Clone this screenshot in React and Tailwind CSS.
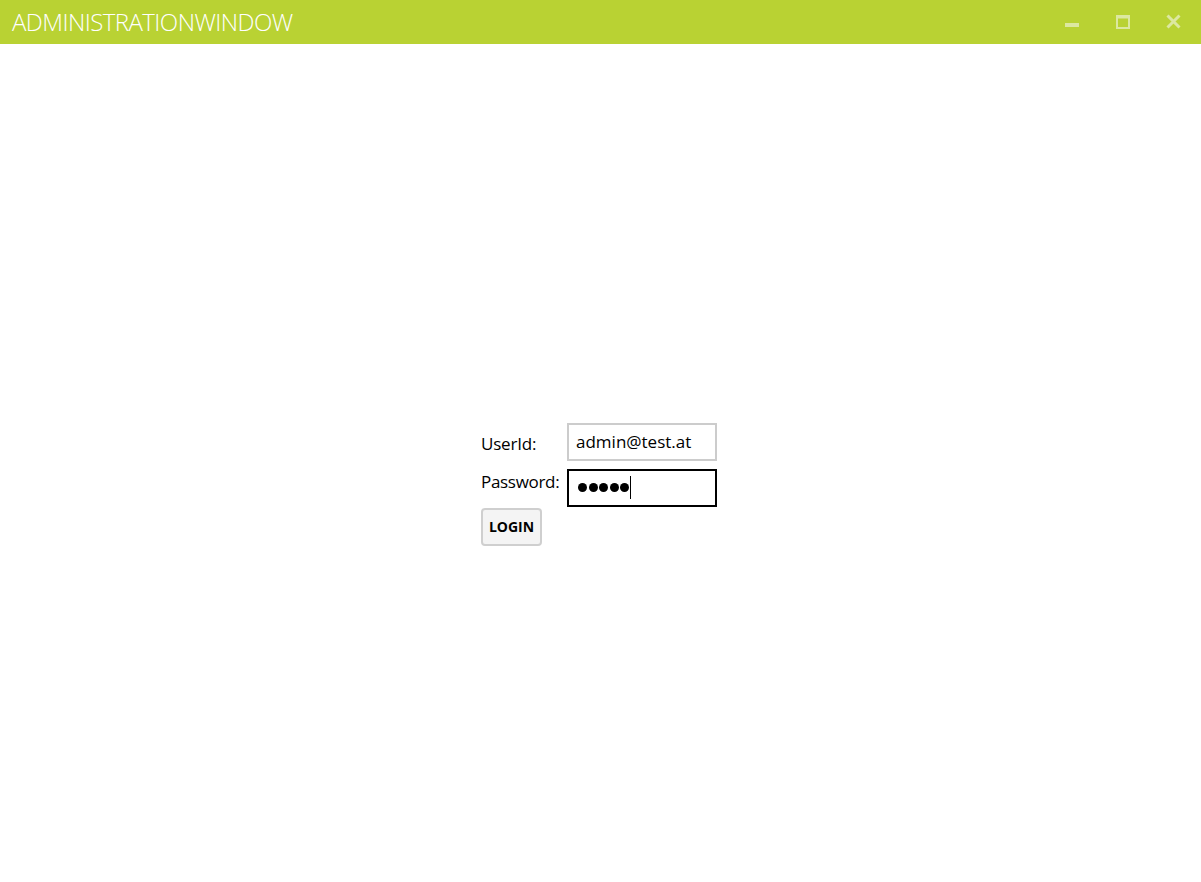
export default function App() {
  return (
    <div className="w-[1201px] h-[882px] bg-white flex flex-col font-['Open_Sans',sans-serif] overflow-hidden">
      {/* title bar */}
      <div className="h-[44px] bg-[#b9d233] flex items-center justify-between shrink-0">
        <h1 className="pl-[12px] text-[24px] font-light text-white tracking-[-0.55px] leading-none">ADMINISTRATIONWINDOW</h1>
        <div className="flex h-full pr-[2px]">
          <button className="w-[51px] h-full flex items-center justify-center">
            <svg width="14" height="14" viewBox="0 0 14 14">
              <rect x="0" y="8" width="14" height="4" fill="#dce8a0" />
            </svg>
          </button>
          <button className="w-[51px] h-full flex items-center justify-center">
            <svg width="14" height="14" viewBox="0 0 14 14" className="mt-[-1px]">
              <rect x="1" y="1" width="12" height="12" fill="none" stroke="#dce8a0" strokeWidth="2" />
              <rect x="0" y="0" width="14" height="3.5" fill="#dce8a0" />
            </svg>
          </button>
          <button className="w-[51px] h-full flex items-center justify-center">
            <svg width="15" height="15" viewBox="0 0 15 15" className="mt-[-1px]">
              <path d="M1.5 1.5 L13.5 13.5 M13.5 1.5 L1.5 13.5" stroke="#dce8a0" strokeWidth="3" />
            </svg>
          </button>
        </div>
      </div>

      {/* login form */}
      <div className="flex-1 flex items-center justify-center pt-[42px] pr-[3px]">
        <div className="grid grid-cols-[86px_150px] text-[17px] text-black">
          <label className="pt-[8px] tracking-[-0.2px]">UserId:</label>
          <input
            readOnly
            defaultValue="admin@test.at"
            className="h-[38px] w-[150px] border-2 border-[#cccccc] px-[7px] text-[17px] outline-none"
          />
          <label className="mt-[8px] tracking-[-0.3px]">Password:</label>
          <div className="h-[38px] w-[150px] border-2 border-black mt-[8px] flex items-center pl-[9px]">
            <div className="flex gap-[1.5px] items-center">
              {[0, 1, 2, 3, 4].map((i) => (
                <span key={i} className="w-[9px] h-[9px] rounded-full bg-black" />
              ))}
            </div>
            <span className="ml-[1px] w-[1px] h-[23px] bg-black" />
          </div>
          <button className="mt-[1px] h-[38px] w-[61px] rounded-[4px] border-2 border-[#cfcfcf] bg-[#f4f4f4] text-[14px] font-bold">
            LOGIN
          </button>
        </div>
      </div>
    </div>
  );
}
